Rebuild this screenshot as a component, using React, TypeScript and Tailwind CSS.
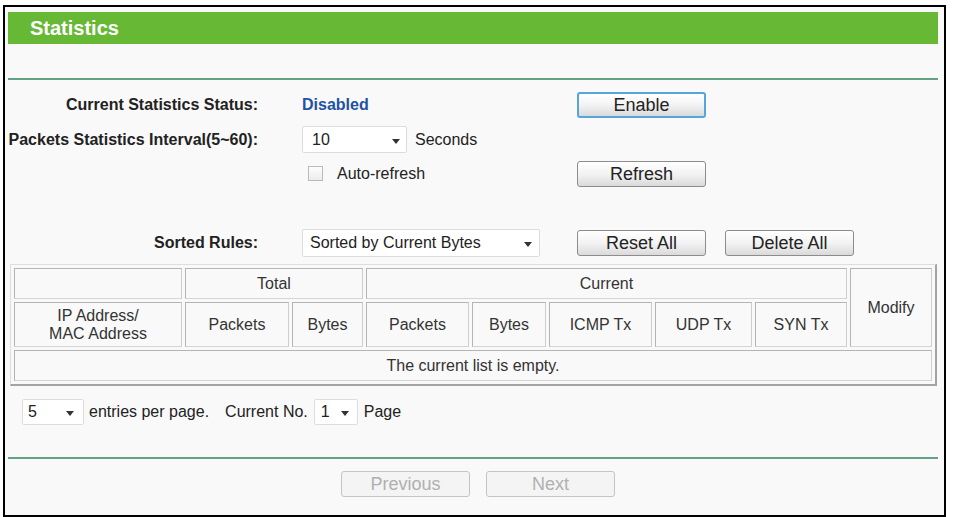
import React from "react";

const FONT = "font-['Liberation_Sans',Arial,sans-serif]";

function Arrow() {
  return (
    <svg width="8" height="5" viewBox="0 0 8 5" className="mt-[3px]">
      <path d="M0 0 H8 L4 5 Z" fill="#333" />
    </svg>
  );
}

function Select({ value, className, textPad, arrowPad }: { value: string; className: string; textPad: string; arrowPad: string }) {
  return (
    <div
      className={`flex items-center justify-between rounded-[2px] border border-[#dcdcdc] bg-white text-[16px] text-[#222] ${className}`}
    >
      <span className={textPad}>{value}</span>
      <span className={arrowPad}>
        <Arrow />
      </span>
    </div>
  );
}

function Button({ label, className = "" }: { label: string; className?: string }) {
  return (
    <div
      className={`flex h-[26px] w-[129px] items-center justify-center rounded-[3px] border border-[#8c8c8c] bg-linear-to-b from-white via-[#f3f3f3] to-[#dadada] text-[18px] leading-none text-[#222] ${className}`}
    >
      {label}
    </div>
  );
}

function DisabledButton({ label }: { label: string }) {
  return (
    <div className="flex h-[26px] w-[129px] items-center justify-center rounded-[3px] border border-[#c4c4c4] bg-[#f4f4f4] text-[18px] leading-none text-[#b0b0b0]">
      {label}
    </div>
  );
}

function Cell({ children, className = "" }: { children?: React.ReactNode; className?: string }) {
  return (
    <div
      className={`flex items-center justify-center border border-t-[#b4b4b4] border-l-[#b4b4b4] border-r-[#cdcdcd] border-b-[#d4d4d4] text-center text-[16px] leading-[18px] text-[#333] ${className}`}
    >
      {children}
    </div>
  );
}

function Label({ children }: { children: React.ReactNode }) {
  return <div className="w-[255px] pr-[2px] text-right text-[16px] font-bold text-[#222]">{children}</div>;
}

export default function App() {
  return (
    <div className={`h-[517px] w-[953px] bg-white pl-[3px] pt-[5px] ${FONT}`}>
      <div className="h-[512px] w-[943px] border-2 border-black bg-[#f9f9f9]">
        {/* title bar */}
        <div className="ml-[3px] mt-[5px] flex h-[32px] w-[930px] items-center bg-[#67b834] pl-[22px] text-[20px] font-bold text-white">
          Statistics
        </div>
        <div className="ml-[3px] mt-[34px] h-[2px] w-[930px] bg-[#64a284]" />

        {/* settings */}
        <div className="mt-[10px] flex h-[29px] items-center">
          <Label>Current Statistics Status:</Label>
          <div className="ml-[42px] w-[275px] text-[16px] font-bold text-[#2152a3]">Disabled</div>
          <Button label="Enable" className="border-2 border-[#55a6dc]" />
        </div>

        <div className="mt-[6px] flex h-[29px] items-center">
          <Label>Packets Statistics Interval(5~60):</Label>
          <div className="ml-[42px] flex w-[275px] items-center">
            <Select value="10" className="h-[27px] w-[105px]" textPad="pl-[9px]" arrowPad="pr-[6px]" />
            <span className="ml-[8px] text-[16px] text-[#222]">Seconds</span>
          </div>
        </div>

        <div className="mt-[5px] flex h-[29px] items-center">
          <div className="w-[255px]" />
          <div className="ml-[42px] flex w-[275px] items-center">
            <div className="ml-[6px] h-[15px] w-[15px] border border-[#b9b9b9] bg-linear-to-b from-[#fdfdfd] to-[#ececec]" />
            <span className="ml-[14px] text-[16px] text-[#222]">Auto-refresh</span>
          </div>
          <Button label="Refresh" />
        </div>

        <div className="mt-[40px] flex h-[29px] items-center">
          <Label>Sorted Rules:</Label>
          <div className="ml-[42px] flex w-[275px] items-center">
            <Select value="Sorted by Current Bytes" className="h-[28px] w-[238px]" textPad="pl-[7px]" arrowPad="pr-[7px]" />
          </div>
          <Button label="Reset All" />
          <Button label="Delete All" className="ml-[19px]" />
        </div>

        {/* statistics table */}
        <div className="ml-[5px] mt-[7px] grid w-[927px] grid-cols-[168px_104px_71px_103px_74px_103px_97px_92px_82px] grid-rows-[31px_45px_31px] gap-[3px] border-l border-t border-b-2 border-r-2 border-l-[#dedede] border-t-[#dedede] border-b-[#a3a3a3] border-r-[#a3a3a3] p-[3px]">
          <Cell />
          <Cell className="col-span-2">Total</Cell>
          <Cell className="col-span-5">Current</Cell>
          <Cell className="row-span-2">Modify</Cell>
          <Cell>
            IP Address/
            <br />
            MAC Address
          </Cell>
          <Cell>Packets</Cell>
          <Cell>Bytes</Cell>
          <Cell>Packets</Cell>
          <Cell>Bytes</Cell>
          <Cell>ICMP Tx</Cell>
          <Cell>UDP Tx</Cell>
          <Cell>SYN Tx</Cell>
          <Cell className="col-span-9">The current list is empty.</Cell>
        </div>

        {/* paging */}
        <div className="mt-[13px] flex h-[26px] items-center text-[16px] text-[#222]">
          <Select value="5" className="ml-[17px] h-[26px] w-[62px]" textPad="pl-[5px]" arrowPad="pr-[9px]" />
          <span className="ml-[5px]">entries per page.</span>
          <span className="ml-[16px]">Current No.</span>
          <Select value="1" className="ml-[6px] h-[26px] w-[44px]" textPad="pl-[6px]" arrowPad="pr-[8px]" />
          <span className="ml-[6px]">Page</span>
        </div>

        <div className="ml-[3px] mt-[32px] h-[2px] w-[930px] bg-[#64a284]" />

        <div className="ml-[336px] mt-[12px] flex gap-[16px]">
          <DisabledButton label="Previous" />
          <DisabledButton label="Next" />
        </div>
      </div>
    </div>
  );
}
